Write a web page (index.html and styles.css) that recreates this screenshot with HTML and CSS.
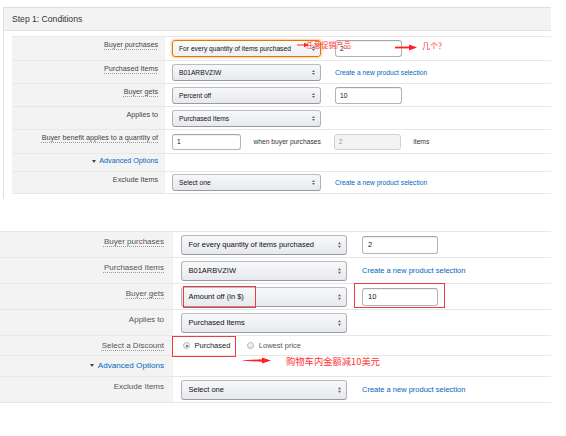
FILE: index.html
```html
<!DOCTYPE html>
<html>
<head>
<meta charset="utf-8">
<title>Conditions</title>
<link rel="stylesheet" href="styles.css">
</head>
<body>
<div class="panel">
  <div class="panel-head">Step 1: Conditions</div>
  <div class="panel-body">
    <div class="form form-a">
      <div class="row a24">
        <div class="lab"><span class="tip">Buyer purchases</span></div>
        <div class="val">
          <span class="dd focus">For every quantity of items purchased<svg class="caret" width="3" height="5" viewBox="0 0 3 5"><path d="M0 2L1.5 0L3 2Z M0 3L1.5 5L3 3Z" fill="#666"/></svg></span>
          <span class="inp gap">2</span>
        </div>
      </div>
      <div class="row a23">
        <div class="lab"><span class="tip">Purchased Items</span></div>
        <div class="val">
          <span class="dd">B01ARBVZIW<svg class="caret" width="3" height="5" viewBox="0 0 3 5"><path d="M0 2L1.5 0L3 2Z M0 3L1.5 5L3 3Z" fill="#666"/></svg></span>
          <a class="link gap">Create a new product selection</a>
        </div>
      </div>
      <div class="row a23">
        <div class="lab"><span class="tip">Buyer gets</span></div>
        <div class="val">
          <span class="dd">Percent off<svg class="caret" width="3" height="5" viewBox="0 0 3 5"><path d="M0 2L1.5 0L3 2Z M0 3L1.5 5L3 3Z" fill="#666"/></svg></span>
          <span class="inp gap">10</span>
        </div>
      </div>
      <div class="row a23">
        <div class="lab">Applies to</div>
        <div class="val">
          <span class="dd">Purchased Items<svg class="caret" width="3" height="5" viewBox="0 0 3 5"><path d="M0 2L1.5 0L3 2Z M0 3L1.5 5L3 3Z" fill="#666"/></svg></span>
        </div>
      </div>
      <div class="row a24">
        <div class="lab"><span class="tip">Buyer benefit applies to a quantity of</span></div>
        <div class="val">
          <span class="inp qty">1</span>
          <span class="txt">when buyer purchases</span>
          <span class="inp dis">2</span>
          <span class="txt">items</span>
        </div>
      </div>
      <div class="row a18">
        <div class="lab"><span class="tri"></span><a class="link adv">Advanced Options</a></div>
        <div class="val"></div>
      </div>
      <div class="row a23 last">
        <div class="lab">Exclude Items</div>
        <div class="val">
          <span class="dd">Select one<svg class="caret" width="3" height="5" viewBox="0 0 3 5"><path d="M0 2L1.5 0L3 2Z M0 3L1.5 5L3 3Z" fill="#666"/></svg></span>
          <a class="link gap">Create a new product selection</a>
        </div>
      </div>
    </div>
  </div>
</div>

<div class="form form-b">
  <div class="row b26">
    <div class="lab"><span class="tip">Buyer purchases</span></div>
    <div class="val">
      <span class="dd">For every quantity of items purchased<svg class="caret" width="3" height="6" viewBox="0 0 3 6"><path d="M0 2.3L1.5 0L3 2.3Z M0 3.7L1.5 6L3 3.7Z" fill="#666"/></svg></span>
      <span class="inp gap">2</span>
    </div>
  </div>
  <div class="row b26">
    <div class="lab"><span class="tip">Purchased Items</span></div>
    <div class="val">
      <span class="dd">B01ARBVZIW<svg class="caret" width="3" height="6" viewBox="0 0 3 6"><path d="M0 2.3L1.5 0L3 2.3Z M0 3.7L1.5 6L3 3.7Z" fill="#666"/></svg></span>
      <a class="link gap">Create a new product selection</a>
    </div>
  </div>
  <div class="row b26">
    <div class="lab"><span class="tip">Buyer gets</span></div>
    <div class="val">
      <span class="dd">Amount off (in $)<svg class="caret" width="3" height="6" viewBox="0 0 3 6"><path d="M0 2.3L1.5 0L3 2.3Z M0 3.7L1.5 6L3 3.7Z" fill="#666"/></svg></span>
      <span class="inp gap">10</span>
    </div>
  </div>
  <div class="row b26">
    <div class="lab">Applies to</div>
    <div class="val">
      <span class="dd">Purchased Items<svg class="caret" width="3" height="6" viewBox="0 0 3 6"><path d="M0 2.3L1.5 0L3 2.3Z M0 3.7L1.5 6L3 3.7Z" fill="#666"/></svg></span>
    </div>
  </div>
  <div class="row b20">
    <div class="lab"><span class="tip">Select a Discount</span></div>
    <div class="val">
      <span class="radio on"></span><span class="rlab dark">Purchased</span>
      <span class="radio off"></span><span class="rlab">Lowest price</span>
    </div>
  </div>
  <div class="row b21">
    <div class="lab"><span class="tri"></span><a class="link adv">Advanced Options</a></div>
    <div class="val"></div>
  </div>
  <div class="row b27 last">
    <div class="lab">Exclude Items</div>
    <div class="val">
      <span class="dd">Select one<svg class="caret" width="3" height="6" viewBox="0 0 3 6"><path d="M0 2.3L1.5 0L3 2.3Z M0 3.7L1.5 6L3 3.7Z" fill="#666"/></svg></span>
      <a class="link gap">Create a new product selection</a>
    </div>
  </div>
</div>

<!-- annotations drawn over the screenshot -->
<svg class="note arrow1" width="12" height="6" viewBox="0 0 12 6"><path d="M0 3H8" stroke="#f22" stroke-width="1"/><path d="M7 0.8L12 3L7 5.2Z" fill="#f22"/></svg>
<span class="note ntext t1">任意促销产品</span>
<svg class="note arrow2" width="22" height="7" viewBox="0 0 22 7"><path d="M0 2.6H15V4.4H0Z" fill="#f22"/><path d="M14 0.5L22 3.5L14 6.5Z" fill="#f22"/></svg>
<span class="note ntext t2">几个？</span>

<span class="note box box1"></span>
<span class="note box box2"></span>
<span class="note box box3"></span>
<svg class="note arrow3" width="28" height="7" viewBox="0 0 28 7"><path d="M0 3.3L19 2.2V0.6L28 3.5L19 6.4V4.8L0 3.7Z" fill="#f22"/></svg>
<span class="note ntext t3">购物车内金额减10美元</span>
</body>
</html>
```

FILE: styles.css
```css
html, body {
  margin: 0;
  padding: 0;
  background: #fff;
}
body {
  position: relative;
  width: 566px;
  height: 436px;
  overflow: hidden;
  font-family: "Liberation Sans", Arial, sans-serif;
  color: #111;
}

/* ---------- top panel ---------- */
.panel {
  margin: 7px 0 0 3px;
  width: 547px;
  border-top: 1px solid #dedede;
  border-left: 1px solid #dedede;
  padding-bottom: 5px;
}
.panel-head {
  height: 22px;
  line-height: 22px;
  background: #f3f3f3;
  border-bottom: 1px solid #e3e3e3;
  padding-left: 8px;
  font-size: 8.6px;
  color: #333;
}
.panel-body {
  padding: 5px 0 0 8px;
}

/* ---------- generic form rows ---------- */
.form .row {
  display: flex;
  box-sizing: border-box;
  border-top: 1px solid #e7e7e7;
}
.form .row.last {
  border-bottom: 1px solid #e7e7e7;
}
.lab {
  flex: none;
  box-sizing: border-box;
  background: #f3f3f3;
  text-align: right;
  white-space: nowrap;
}
.val {
  flex: 1;
  display: flex;
  align-items: center;
  white-space: nowrap;
}
.tip {
  text-decoration: underline dotted #9a9a9a;
  text-decoration-thickness: 1px;
  text-underline-offset: 2px;
}

.dd {
  display: flex;
  align-items: center;
  box-sizing: border-box;
  flex: none;
  border: 1px solid #adb1b8;
  border-top-color: #b9bcc2;
  border-bottom-color: #979aa0;
  border-radius: 3px;
  background: linear-gradient(#f7f8fa, #e7e9ec);
  color: #111;
  overflow: hidden;
}
.dd.focus {
  border-color: #e77600;
  box-shadow: 0 0 2px 1px rgba(228, 121, 17, 0.35);
  background: linear-gradient(#fbfbfc, #eff0f2);
}
.caret {
  margin-left: auto;
  flex: none;
}
.inp {
  display: flex;
  align-items: center;
  box-sizing: border-box;
  flex: none;
  background: #fff;
  border: 1px solid #b4b4b4;
  border-top-color: #a6a6a6;
  border-radius: 3px;
  box-shadow: inset 0 1px 0 rgba(0, 0, 0, 0.06);
  color: #111;
}
.inp.dis {
  background: #f3f3f3;
  border-color: #d0d0d0;
  color: #999;
  box-shadow: none;
}
.link {
  color: #0066c0;
  text-decoration: none;
}
.txt {
  color: #333;
}
.tri {
  display: inline-block;
  width: 0;
  height: 0;
  border-left: 2px solid transparent;
  border-right: 2px solid transparent;
  border-top: 3px solid #444;
  vertical-align: middle;
}

/* ---------- top form sizing ---------- */
.form-a {
  width: 539px;
}
.form-a .lab {
  width: 153px;
  padding: 3px 7px 0 0;
  font-size: 7.2px;
  line-height: 10px;
  color: #444;
}
.form-a .val {
  padding-left: 7px;
  font-size: 6.7px;
}
.form-a .a24 { height: 24px; }
.form-a .a23 { height: 23px; }
.form-a .a18 { height: 18px; }
.form-a .a18 .lab { padding-top: 2px; }
.form-a .dd {
  width: 149px;
  height: 17px;
  padding: 0 5px 0 6px;
}
.form-a .inp {
  width: 67px;
  height: 17px;
  padding-left: 4px;
}
.form-a .gap { margin-left: 14px; }
.form-a .inp.qty {
  width: 69px;
  height: 16px;
}
.form-a .txt { margin-left: 12.5px; }
.form-a .inp.dis {
  margin-left: 13px;
  width: 67px;
  height: 16px;
}
.form-a .tri { margin-right: 3px; }

/* ---------- bottom form sizing ---------- */
.form-b {
  margin-top: 32px;
  width: 551px;
}
.form-b .lab {
  width: 173px;
  padding: 4px 9px 0 0;
  font-size: 8px;
  line-height: 11px;
  color: #555;
}
.form-b .val {
  padding-left: 8px;
  font-size: 7.5px;
}
.form-b .b26 { height: 26px; }
.form-b .b27 { height: 27px; }
.form-b .b20 { height: 20px; }
.form-b .b21 { height: 21px; }
.form-b .dd {
  width: 166px;
  height: 20px;
  padding: 0 5px 0 6.5px;
}
.form-b .inp {
  width: 76px;
  height: 18px;
  padding-left: 5px;
}
.form-b .gap { margin-left: 15px; }
.form-b .tri { margin-right: 4px; }
.form-b .adv { font-size: 8.1px; }

.radio {
  flex: none;
  box-sizing: border-box;
  width: 7px;
  height: 7px;
  border-radius: 50%;
  border: 1px solid #b5b5b5;
  background: linear-gradient(#fafafa, #e4e4e4);
  margin-left: 2px;
  position: relative;
}
.radio.on::after {
  content: "";
  position: absolute;
  left: 1.5px;
  top: 1.5px;
  width: 2px;
  height: 2px;
  border-radius: 50%;
  background: #555;
}
.radio.off {
  margin-left: 17px;
}
.rlab {
  margin-left: 4.5px;
  color: #555;
}
.rlab.dark {
  color: #222;
}

/* ---------- annotation overlays ---------- */
.note {
  position: absolute;
}
.ntext {
  color: #f33;
  font-family: "Noto Sans CJK SC", "Noto Sans", sans-serif;
  white-space: nowrap;
  line-height: 1;
}
.arrow1 { left: 297px; top: 42px; }
.t1 { left: 306px; top: 41px; font-size: 7.5px; }
.arrow2 { left: 395px; top: 44px; }
.t2 { left: 422px; top: 42px; font-size: 8px; }

.box {
  box-sizing: border-box;
  border: 1.5px solid #ee3b3b;
}
.box1 { left: 183px; top: 286px; width: 73px; height: 22px; }
.box2 { left: 354px; top: 283px; width: 91px; height: 25px; }
.box3 { left: 172px; top: 336px; width: 64px; height: 21px; }
.arrow3 { left: 243px; top: 357px; }
.t3 { left: 286px; top: 357px; font-size: 9.3px; }
```
